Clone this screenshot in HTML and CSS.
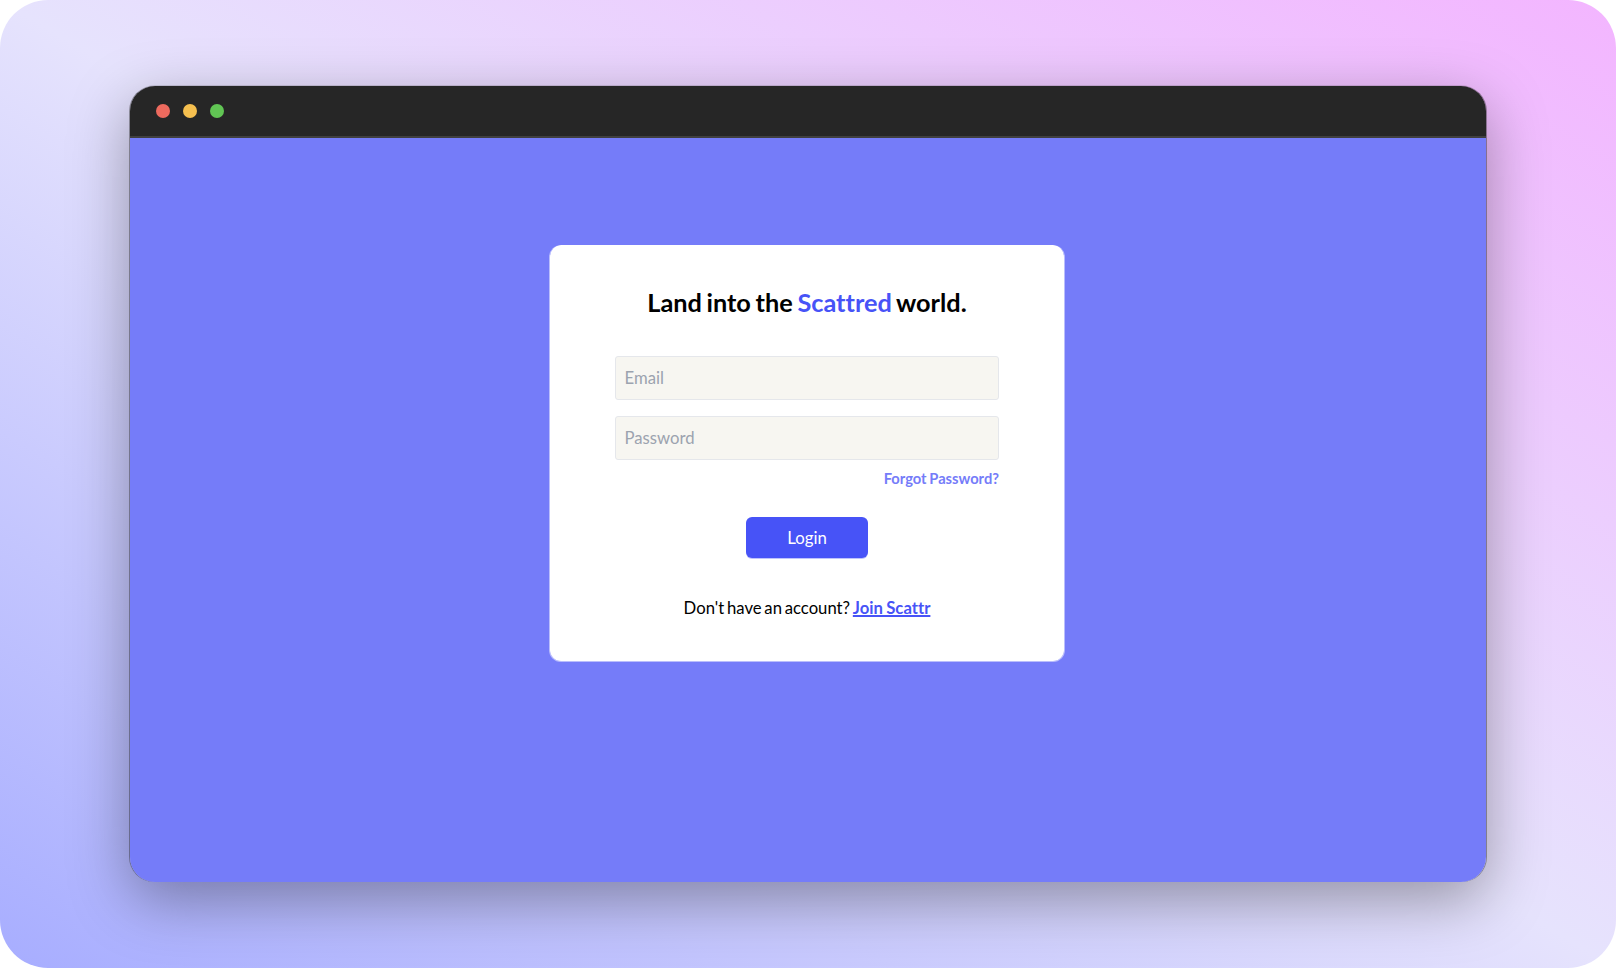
FILE: index.html
```html
<!DOCTYPE html>
<html lang="en">
<head>
<meta charset="utf-8">
<title>Scattr – Login</title>
<link rel="stylesheet" href="styles.css">
</head>
<body>
<div class="backdrop">
  <div class="window">
    <header class="titlebar">
      <span class="dot dot-close"></span>
      <span class="dot dot-minimize"></span>
      <span class="dot dot-zoom"></span>
    </header>
    <main class="page">
      <form class="card">
        <h1 class="title">Land into the <span class="brand">Scattred</span> world.</h1>
        <input class="field" type="email" placeholder="Email">
        <input class="field" type="password" placeholder="Password">
        <a class="forgot">Forgot Password?</a>
        <button class="login" type="button">Login</button>
        <p class="signup">Don't have an account? <a class="join">Join Scattr</a></p>
      </form>
    </main>
  </div>
</div>
</body>
</html>
```
FILE: styles.css
```css
* { box-sizing: border-box; }
body { margin: 0; background: #fff; font-family: Lato, sans-serif; font-variant-ligatures: none; }
.backdrop {
  width: 1616px;
  height: 968px;
  padding: 86px 130px;
  border-radius: 48px;
  background: linear-gradient(to top right, #a7adff 0%, #e6e3fd 50%, #f3b5ff 100%);
}
.window {
  width: 1356px;
  height: 796px;
  display: flex;
  flex-direction: column;
  border-radius: 25px;
  overflow: hidden;
  box-shadow: 1px 0 0 rgba(38, 38, 38, .4), -1px 0 0 rgba(38, 38, 38, .4), 0 -1px 0 rgba(38, 38, 38, .15), 0 18px 60px rgba(0, 0, 0, .35);
}
.titlebar {
  height: 52px;
  flex: none;
  display: flex;
  align-items: center;
  gap: 13px;
  padding: 0 26px;
  background: #262626;
  border-bottom: 2px solid #404040;
}
.dot { width: 14px; height: 14px; border-radius: 50%; }
.dot-close { background: #ed6a5e; }
.dot-minimize { background: #f5bf4f; }
.dot-zoom { background: #61c554; }
.page { flex: 1; display: flex; justify-content: center; align-items: flex-start; padding: 107px 2px 0 0; background: #757cf9; }
.card {
  width: 516px;
  height: 417px;
  padding: 41px 65px 0;
  display: flex;
  flex-direction: column;
  border: 1px solid rgba(255, 255, 255, .5);
  border-top: 0;
  border-radius: 12px;
  background: #fff;
  background-clip: padding-box;
}
.title { margin: 0 0 38px; font-size: 25.3px; line-height: 32px; font-weight: 700; text-align: center; white-space: nowrap; word-spacing: -1.5px; color: #000; }
.brand { color: #4753f7; }
.field { height: 44px; margin: 0 0 16px; padding: 0 8.5px 1px; border: 1px solid #e5e7eb; border-radius: 3px; background: #f7f6f1; font: 400 16.7px Lato, sans-serif; }
.field::placeholder { color: #9ca3af; }
.forgot { align-self: flex-end; margin-top: -8px; font-size: 14.7px; line-height: 20px; font-weight: 700; color: #757cf9; word-spacing: -.8px; }
.login { align-self: center; width: 122px; height: 41px; margin: 29px 0 1px; padding: 0 0 1px; border: 0; border-radius: 6px; background: #4753f7; box-shadow: 0 1px 0 rgba(71, 83, 247, .35); color: #fff; font: 400 16.8px Lato, sans-serif; }
.signup { margin: 37px 0 0; font-size: 16.7px; line-height: 25px; text-align: center; white-space: nowrap; word-spacing: -1.5px; color: #000; }
.join { color: #4753f7; font-weight: 700; text-decoration: underline; text-decoration-thickness: 2px; word-spacing: -.8px; }
```
